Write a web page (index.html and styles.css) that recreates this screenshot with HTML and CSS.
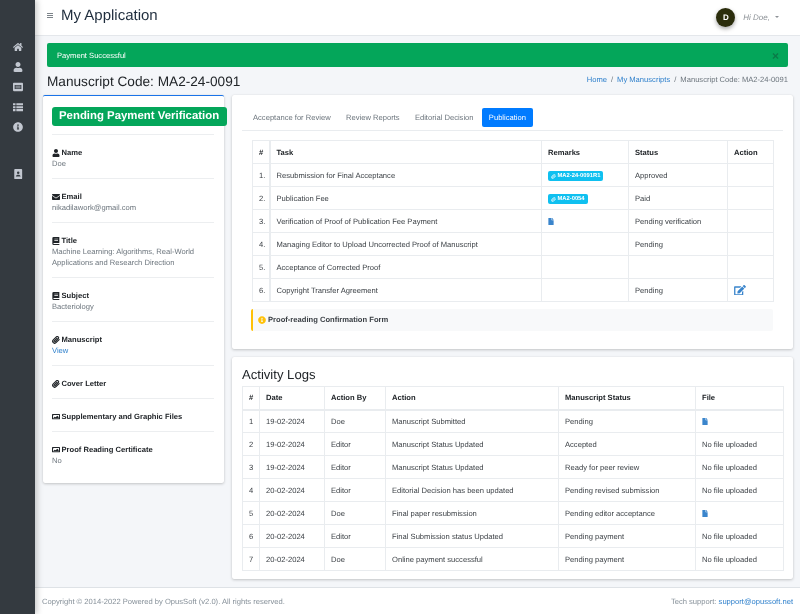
FILE: index.html
```html
<!DOCTYPE html>
<html lang="en">
<head>
<meta charset="utf-8">
<title>My Application</title>
<link rel="stylesheet" href="styles.css">
</head>
<body>
<svg class="defs" xmlns="http://www.w3.org/2000/svg">
  <symbol id="i-home" viewBox="0 0 576 512"><path fill="currentColor" d="M280.37 148.26L96 300.11V464a16 16 0 0 0 16 16l112.06-.29a16 16 0 0 0 15.92-16V368a16 16 0 0 1 16-16h64a16 16 0 0 1 16 16v95.64a16 16 0 0 0 16 16.05L464 480a16 16 0 0 0 16-16V300L295.67 148.26a12.19 12.19 0 0 0-15.3 0zM571.6 251.47L488 182.56V44.05a12 12 0 0 0-12-12h-56a12 12 0 0 0-12 12v72.61L318.47 43a48 48 0 0 0-61 0L4.34 251.47a12 12 0 0 0-1.6 16.9l25.5 31A12 12 0 0 0 45.15 301l235.22-193.74a12.19 12.19 0 0 1 15.3 0L530.9 301a12 12 0 0 0 16.9-1.6l25.5-31a12 12 0 0 0-1.7-16.93z"/></symbol>
  <symbol id="i-user" viewBox="0 0 448 512"><path fill="currentColor" d="M224 256c70.7 0 128-57.3 128-128S294.7 0 224 0 96 57.3 96 128s57.3 128 128 128zm89.6 32h-16.7c-22.2 10.2-46.9 16-72.9 16s-50.6-5.8-72.9-16h-16.7C60.2 288 0 348.2 0 422.4V464c0 26.5 21.5 48 48 48h352c26.5 0 48-21.5 48-48v-41.6c0-74.2-60.2-134.4-134.4-134.4z"/></symbol>
  <symbol id="i-listalt" viewBox="0 0 24 24"><path fill="currentColor" fill-rule="evenodd" d="M2 2h20a2 2 0 0 1 2 2v16a2 2 0 0 1-2 2H2a2 2 0 0 1-2-2V4a2 2 0 0 1 2-2zm2 5v10h16V7zm2 2h12v2H6zm0 4h12v2H6z"/></symbol>
  <symbol id="i-thlist" viewBox="0 0 24 24"><path fill="currentColor" d="M0 3h6v5H0zM8 3h16v5H8zM0 10h6v5H0zM8 10h16v5H8zM0 17h6v5H0zM8 17h16v5H8z"/></symbol>
  <symbol id="i-info" viewBox="0 0 512 512"><path fill="currentColor" d="M256 8C119 8 8 119 8 256s111 248 248 248 248-111 248-248S393 8 256 8zm0 110a42 42 0 1 1 0 84 42 42 0 0 1 0-84zm56 254c0 6.6-5.4 12-12 12h-88c-6.6 0-12-5.4-12-12v-24c0-6.6 5.4-12 12-12h12v-64h-12c-6.6 0-12-5.4-12-12v-24c0-6.6 5.4-12 12-12h64c6.6 0 12 5.4 12 12v100h12c6.6 0 12 5.4 12 12v24z"/></symbol>
  <symbol id="i-addr" viewBox="0 0 24 24"><path fill="currentColor" fill-rule="evenodd" d="M5 0h15a2 2 0 0 1 2 2v20a2 2 0 0 1-2 2H5a2 2 0 0 1-2-2V2a2 2 0 0 1 2-2zm7.500 6a3 3 0 1 0 0 6 3 3 0 0 0 0-6zM7 17.500c0-2.500 2.500-4 5.500-4s5.500 1.500 5.500 4V18H7z"/></symbol>
  <symbol id="i-mail" viewBox="0 0 24 24"><path fill="currentColor" d="M2 3h20a2 2 0 0 1 2 2v1l-12 8L0 6V5a2 2 0 0 1 2-2zM0 8.500l12 8 12-8V19a2 2 0 0 1-2 2H2a2 2 0 0 1-2-2z"/></symbol>
  <symbol id="i-book" viewBox="0 0 24 24"><path fill="currentColor" fill-rule="evenodd" d="M5 0h17v18H5a2 2 0 0 0 0 3h17v3H5a4 4 0 0 1-4-4V4a4 4 0 0 1 4-4zm2 5v2h11V5zm0 4v2h11V9z"/></symbol>
  <symbol id="i-clip" viewBox="0 0 24 24"><path fill="none" stroke="currentColor" stroke-width="3.200" stroke-linecap="round" stroke-linejoin="round" d="M21.440 11.050l-9.190 9.190a6 6 0 0 1-8.490-8.490l9.190-9.190a4 4 0 0 1 5.660 5.660l-9.200 9.190a2 2 0 0 1-2.830-2.830l8.490-8.480"/></symbol>
  <symbol id="i-image" viewBox="0 0 24 24"><path fill="currentColor" fill-rule="evenodd" d="M6 3h16a2 2 0 0 1 2 2v12a2 2 0 0 1-2 2H2a2 2 0 0 1-2-2V5a2 2 0 0 1 2-2h1zM3 8v8h18V6H5L3 8zm1 7l4-4 3 2 5-5 4 4v3z"/></symbol>
  <symbol id="i-file" viewBox="0 0 384 512"><path fill="currentColor" d="M224 136V0H24C10.700 0 0 10.700 0 24v464c0 13.300 10.700 24 24 24h336c13.300 0 24-10.700 24-24V160H248c-13.200 0-24-10.800-24-24zm160-14.100v6.100H256V0h6.100c6.400 0 12.500 2.500 17 7l97.900 98c4.500 4.500 7 10.600 7 16.900z"/></symbol>
  <symbol id="i-edit" viewBox="0 0 576 512"><path fill="currentColor" d="M402.600 83.200l90.200 90.200c3.800 3.800 3.800 10 0 13.800L274.400 405.600l-92.800 10.300c-12.400 1.400-22.900-9.100-21.500-21.500l10.300-92.800L388.800 83.200c3.800-3.800 10-3.800 13.800 0zm162-22.900l-48.800-48.800c-15.200-15.200-39.900-15.200-55.200 0l-35.400 35.400c-3.800 3.800-3.800 10 0 13.800l90.200 90.200c3.800 3.800 10 3.800 13.800 0l35.400-35.400c15.200-15.300 15.200-40 0-55.200zM384 346.200V448H64V128h229.800c3.200 0 6.200-1.300 8.500-3.500l40-40c7.600-7.600 2.200-20.500-8.500-20.500H48C21.500 64 0 85.500 0 112v352c0 26.500 21.500 48 48 48h352c26.500 0 48-21.500 48-48V306.200c0-10.700-12.900-16-20.500-8.500l-40 40c-2.200 2.300-3.500 5.300-3.500 8.500z"/></symbol>
</svg>

<div class="app">
  <aside class="sidebar">
    <nav class="side-group">
      <svg class="side-icon"><use href="#i-home"/></svg>
      <svg class="side-icon"><use href="#i-user"/></svg>
      <svg class="side-icon"><use href="#i-listalt"/></svg>
      <svg class="side-icon"><use href="#i-thlist"/></svg>
      <svg class="side-icon"><use href="#i-info"/></svg>
    </nav>
    <nav class="side-group side-lower">
      <svg class="side-icon"><use href="#i-addr"/></svg>
    </nav>
  </aside>

  <div class="main">
    <header class="topbar">
      <div class="burger"><span></span><span></span><span></span></div>
      <h1 class="app-name">My Application</h1>
      <div class="user-box">
        <span class="avatar">D</span>
        <span class="hi">Hi Doe,</span>
        <span class="caret"></span>
      </div>
    </header>

    <div class="content">
      <div class="alert"><span>Payment Successful</span><span class="alert-close">×</span></div>

      <div class="page-head">
        <h2 class="page-title">Manuscript Code: MA2-24-0091</h2>
        <div class="crumbs"><a href="#">Home</a><span class="sep">/</span><a href="#">My Manuscripts</a><span class="sep">/</span><span>Manuscript Code: MA2-24-0091</span></div>
      </div>

      <div class="columns">
        <section class="card profile">
          <div class="status-wrap"><span class="status">Pending Payment Verification</span></div>
          <div class="info"><div class="info-label"><svg class="lab-icon"><use href="#i-user"/></svg>Name</div><div class="info-val">Doe</div></div>
          <div class="info"><div class="info-label"><svg class="lab-icon"><use href="#i-mail"/></svg>Email</div><div class="info-val">nikadilawork@gmail.com</div></div>
          <div class="info"><div class="info-label"><svg class="lab-icon"><use href="#i-book"/></svg>Title</div><div class="info-val">Machine Learning: Algorithms, Real-World Applications and Research Direction</div></div>
          <div class="info"><div class="info-label"><svg class="lab-icon"><use href="#i-book"/></svg>Subject</div><div class="info-val">Bacteriology</div></div>
          <div class="info"><div class="info-label"><svg class="lab-icon"><use href="#i-clip"/></svg>Manuscript</div><div class="info-val"><a href="#">View</a></div></div>
          <div class="info"><div class="info-label"><svg class="lab-icon"><use href="#i-clip"/></svg>Cover Letter</div></div>
          <div class="info"><div class="info-label"><svg class="lab-icon"><use href="#i-image"/></svg>Supplementary and Graphic Files</div></div>
          <div class="info last"><div class="info-label"><svg class="lab-icon"><use href="#i-image"/></svg>Proof Reading Certificate</div><div class="info-val">No</div></div>
        </section>

        <div class="right">
          <section class="card pub">
            <nav class="tabs">
              <a class="tab" href="#">Acceptance for Review</a>
              <a class="tab" href="#">Review Reports</a>
              <a class="tab" href="#">Editorial Decision</a>
              <a class="tab active" href="#">Publication</a>
            </nav>
            <table class="grid task-table">
              <colgroup><col class="t1"><col class="t2"><col class="t3"><col class="t4"><col class="t5"></colgroup>
              <thead><tr><th>#</th><th>Task</th><th>Remarks</th><th>Status</th><th>Action</th></tr></thead>
              <tbody>
                <tr><td>1.</td><td>Resubmission for Final Acceptance</td><td><span class="tag"><svg class="tag-icon"><use href="#i-clip"/></svg>MA2-24-0091R1</span></td><td>Approved</td><td></td></tr>
                <tr><td>2.</td><td>Publication Fee</td><td><span class="tag"><svg class="tag-icon"><use href="#i-clip"/></svg>MA2-0054</span></td><td>Paid</td><td></td></tr>
                <tr><td>3.</td><td>Verification of Proof of Publication Fee Payment</td><td><svg class="file-icon"><use href="#i-file"/></svg></td><td>Pending verification</td><td></td></tr>
                <tr><td>4.</td><td>Managing Editor to Upload Uncorrected Proof of Manuscript</td><td></td><td>Pending</td><td></td></tr>
                <tr><td>5.</td><td>Acceptance of Corrected Proof</td><td></td><td></td><td></td></tr>
                <tr><td>6.</td><td>Copyright Transfer Agreement</td><td></td><td>Pending</td><td><svg class="edit-icon"><use href="#i-edit"/></svg></td></tr>
              </tbody>
            </table>
            <div class="callout"><svg class="callout-icon"><use href="#i-info"/></svg><strong>Proof-reading Confirmation Form</strong></div>
          </section>

          <section class="card logs">
            <h3 class="logs-title">Activity Logs</h3>
            <table class="grid log-table">
              <colgroup><col class="l1"><col class="l2"><col class="l3"><col class="l4"><col class="l5"><col class="l6"></colgroup>
              <thead><tr><th>#</th><th>Date</th><th>Action By</th><th>Action</th><th>Manuscript Status</th><th>File</th></tr></thead>
              <tbody>
                <tr><td>1</td><td>19-02-2024</td><td>Doe</td><td>Manuscript Submitted</td><td>Pending</td><td><svg class="file-icon"><use href="#i-file"/></svg></td></tr>
                <tr><td>2</td><td>19-02-2024</td><td>Editor</td><td>Manuscript Status Updated</td><td>Accepted</td><td>No file uploaded</td></tr>
                <tr><td>3</td><td>19-02-2024</td><td>Editor</td><td>Manuscript Status Updated</td><td>Ready for peer review</td><td>No file uploaded</td></tr>
                <tr><td>4</td><td>20-02-2024</td><td>Editor</td><td>Editorial Decision has been updated</td><td>Pending revised submission</td><td>No file uploaded</td></tr>
                <tr><td>5</td><td>20-02-2024</td><td>Doe</td><td>Final paper resubmission</td><td>Pending editor acceptance</td><td><svg class="file-icon"><use href="#i-file"/></svg></td></tr>
                <tr><td>6</td><td>20-02-2024</td><td>Editor</td><td>Final Submission status Updated</td><td>Pending payment</td><td>No file uploaded</td></tr>
                <tr><td>7</td><td>20-02-2024</td><td>Doe</td><td>Online payment successful</td><td>Pending payment</td><td>No file uploaded</td></tr>
              </tbody>
            </table>
          </section>
        </div>
      </div>
    </div>

    <footer class="footer">
      <span>Copyright © 2014-2022 Powered by OpusSoft (v2.0). All rights reserved.</span>
      <span>Tech support: <a href="#">support@opussoft.net</a></span>
    </footer>
  </div>
</div>
</body>
</html>
```

FILE: styles.css
```css
* { box-sizing: border-box; }
html, body { margin: 0; padding: 0; height: 100%; }
body {
  font-family: "Liberation Sans", Arial, sans-serif;
  font-size: 7.6px;
  line-height: 11px;
  color: #212529;
  background: #f4f6f9;
  overflow: hidden;
  text-rendering: geometricPrecision;
}
a { color: #2f80cc; text-decoration: none; }
.defs { display: none; }

.app { display: flex; width: 800px; height: 614px; will-change: transform; }

.sidebar {
  flex: 0 0 35px;
  background: #343a40;
  box-shadow: 2px 0 6px rgba(0, 0, 0, .22);
  padding-top: 42px;
  position: relative;
  z-index: 2;
}
.side-group { display: flex; flex-direction: column; align-items: center; gap: 10px; }
.side-lower { margin-top: 37px; }
.side-icon { width: 10px; height: 10px; color: #c2c7d0; display: block; }

.main { flex: 1; min-width: 0; display: flex; flex-direction: column; }

.topbar {
  height: 36px;
  flex: none;
  background: #fff;
  border-bottom: 1px solid #e4e7eb;
  display: flex;
  align-items: center;
  padding: 0 21px 1px 12px;
}
.burger { width: 6px; display: flex; flex-direction: column; gap: 1px; margin: 0 8px 3px 0; }
.burger span { height: 1px; background: #7c8389; display: block; }
.app-name { margin: 0 0 3px; font-size: 15px; line-height: 18px; font-weight: 400; color: #1f2d3d; }
.user-box { margin-left: auto; display: flex; align-items: center; color: #8d9297; }
.avatar {
  width: 19px; height: 19px; border-radius: 50%;
  background: #2b2d0c; color: #fff; font-weight: 700; font-size: 8px;
  display: flex; align-items: center; justify-content: center;
  box-shadow: 0 2px 4px rgba(0, 0, 0, .35);
  margin-right: 8px;
}
.hi { font-style: italic; font-size: 8px; }
.caret {
  width: 0; height: 0; margin-left: 5px;
  border-left: 2.5px solid transparent; border-right: 2.5px solid transparent;
  border-top: 2.5px solid #8d9297;
}

.content { flex: 1; min-height: 0; padding-top: 7px; }

.alert {
  margin: 0 12px;
  height: 24px;
  background: #04a65a;
  border-radius: 2px;
  color: #fff;
  display: flex;
  align-items: center;
  justify-content: space-between;
  padding: 0 9px 0 10px;
}
.alert-close { color: #0b7a48; font-size: 12px; font-weight: 700; padding-top: 3px; }

.page-head {
  margin: 0 12px;
  height: 28px;
  display: flex;
  align-items: center;
  justify-content: space-between;
}
.page-title { margin: 1px 0 0; font-size: 13.65px; line-height: 18px; font-weight: 400; color: #212529; }
.crumbs { color: #6c757d; margin-bottom: 3px; }
.sep { margin: 0 4px; }

.columns { display: flex; align-items: flex-start; gap: 8px; padding: 0 7px 0 8px; }
.card {
  background: #fff;
  border-radius: 2px;
  box-shadow: 0 0 1px rgba(0, 0, 0, .125), 0 1px 3px rgba(0, 0, 0, .2);
}

.profile {
  flex: 0 0 181px;
  min-width: 0;
  height: 388px;
  border-top: 1.5px solid #1a73e8;
  padding: 0 10px 0 9px;
}
.status-wrap { height: 39px; padding-top: 11px; border-bottom: 1px solid #eceef0; }
.status {
  display: block;
  width: 175px;
  height: 19px;
  background: #04a65a;
  color: #fff;
  font-size: 11.4px;
  line-height: 19px;
  font-weight: 700;
  padding-left: 7px;
  border-radius: 3px;
  white-space: nowrap;
  position: relative;
}
.info { padding: 11px 0 10px; border-bottom: 1px solid #eceef0; }
.info.last { border-bottom: 0; }
.info-label { font-weight: 700; color: #212529; display: flex; align-items: center; padding-top: 1px; margin-bottom: -1px; }
.info-val { color: #6c757d; padding-top: 1px; margin-bottom: -1px; }
.lab-icon { width: 8px; height: 8px; margin-right: 1.5px; flex: none; color: #212529; }

.right { flex: 1; min-width: 0; display: flex; flex-direction: column; gap: 8px; }

.pub { height: 254px; padding: 0 10px; }
.tabs {
  display: flex;
  align-items: center;
  height: 36px;
  padding: 13px 0 3px 4px;
  border-bottom: 1px solid #e9ecef;
  gap: 1.3px;
}
.tab { color: #6c757d; padding: 0 7px; height: 19px; line-height: 19px; border-radius: 2px; }
.tab.active { background: #007bff; color: #fff; }

.grid { border-collapse: collapse; table-layout: fixed; }
.grid th, .grid td {
  border: 1px solid #e9ecef;
  height: 23px;
  padding: 0 6px;
  text-align: left;
  vertical-align: middle;
  white-space: nowrap;
}
.grid th { font-weight: 700; color: #212529; }
.grid td { color: #3a3f44; }

.task-table { width: 521px; margin: 9px 0 0 10px; }
.task-table td:first-child, .task-table th:first-child { border-right-width: 2px; }
.t1 { width: 17px; } .t2 { width: 272px; } .t3 { width: 87px; } .t4 { width: 99px; } .t5 { width: 46px; }

.tag {
  display: flex;
  width: fit-content;
  align-items: center;
  height: 10px;
  margin-top: 1px;
  padding: 1px 3px 0;
  background: #0fc0f0;
  color: #fff;
  font-size: 5.8px;
  line-height: 9px;
  font-weight: 700;
  border-radius: 2px;
}
.tag-icon { width: 5px; height: 5px; margin-right: 1.5px; }
.file-icon { width: 6px; height: 7px; color: #3a85cc; display: block; }
.edit-icon { width: 12px; height: 10.5px; color: #3a85cc; display: block; }

.callout {
  margin: 7px 0 0 9px;
  width: 522px;
  height: 22px;
  background: #f8f9fa;
  border-left: 2px solid #ffc107;
  border-radius: 2px;
  display: flex;
  align-items: center;
  padding: 0 0 1px 5px;
  color: #3a3f44;
}
.callout-icon { width: 8px; height: 8px; color: #ffc107; margin-right: 2px; flex: none; }

.logs { height: 222px; padding: 0 10px; }
.logs-title { margin: 0; height: 29px; padding-top: 9px; font-size: 13.1px; line-height: 18px; font-weight: 400; color: #212529; }
.log-table { width: 541px; }
.log-table thead th { border-bottom-width: 2px; }
.l1 { width: 17px; } .l2 { width: 65px; } .l3 { width: 61px; } .l4 { width: 173px; } .l5 { width: 137px; } .l6 { width: 88px; }

.footer {
  height: 27px;
  flex: none;
  background: #fff;
  border-top: 1px solid #dee2e6;
  color: #869099;
  display: flex;
  align-items: center;
  justify-content: space-between;
  padding: 0 7px;
}
```
